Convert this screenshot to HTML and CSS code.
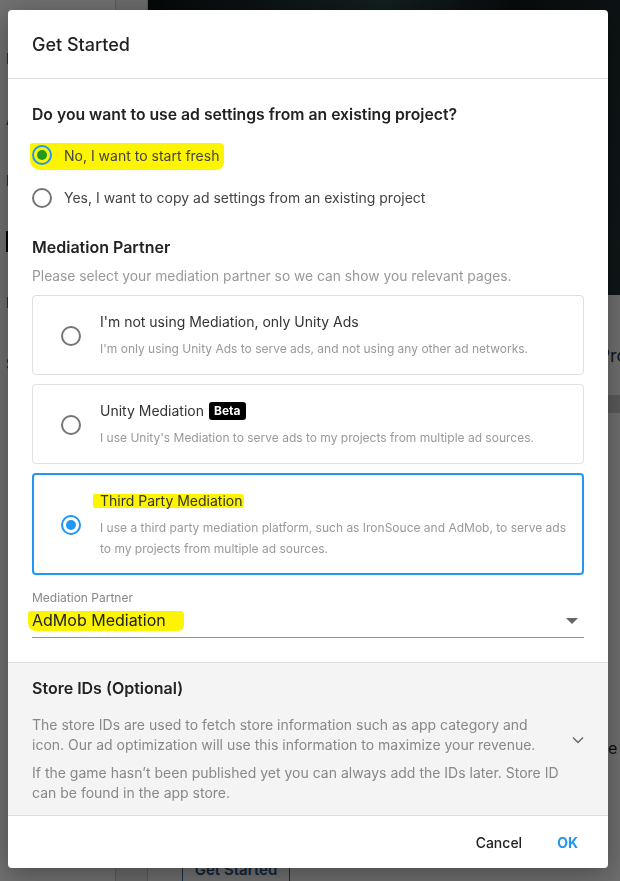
FILE: index.html
```html
<!DOCTYPE html>
<html lang="en">
<head>
  <meta charset="UTF-8">
  <title>Get Started</title>
  <link rel="stylesheet" href="styles.css">
</head>
<body>
  <div class="page">
    <aside class="side">
      <p class="side-item">Monetization</p>
      <p class="side-item">Ad Units</p>
      <p class="side-item">Placements</p>
      <p class="side-item"><span class="side-badge">Beta</span></p>
      <p class="side-item">Reports</p>
      <p class="side-item">Settings</p>
    </aside>
    <div class="rail"></div>
    <main class="main">
      <div class="hero">
        <h2 class="hero-title">Start with Unity Ads and Power<br>Discover revenue</h2>
      </div>
      <div class="tabs"><span>Overview</span><span>Projects</span></div>
      <div class="band"></div>
      <div class="intro">
        <p>Set up your project and choose how you want to serve ads to your players.</p>
      </div>
      <div class="intro intro-low">
        <p>You will need an ad unit before ads can be shown in your game.</p>
      </div>
      <button class="start-btn">Get Started</button>
    </main>
  </div>

  <div class="overlay">
    <div class="modal">
      <header class="modal-head">
        <h1 class="modal-title">Get Started</h1>
      </header>

      <div class="modal-body">
        <h2 class="question">Do you want to use ad settings from an existing project?</h2>
        <div class="choice-list">
          <label class="choice">
            <span class="hl hl-first">
              <span class="radio radio-on radio-marked"></span>
              <span class="choice-text">No, I want to start fresh</span>
            </span>
          </label>
          <label class="choice">
            <span class="radio"></span>
            <span class="choice-text">Yes, I want to copy ad settings from an existing project</span>
          </label>
        </div>

        <h2 class="section-title">Mediation Partner</h2>
        <p class="section-sub">Please select your mediation partner so we can show you relevant pages.</p>

        <div class="cards">
          <div class="card">
            <span class="radio"></span>
            <div class="card-text">
              <div class="card-title">I'm not using Mediation, only Unity Ads</div>
              <div class="card-desc">I'm only using Unity Ads to serve ads, and not using any other ad networks.</div>
            </div>
          </div>
          <div class="card">
            <span class="radio"></span>
            <div class="card-text">
              <div class="card-title">Unity Mediation <span class="badge">Beta</span></div>
              <div class="card-desc">I use Unity's Mediation to serve ads to my projects from multiple ad sources.</div>
            </div>
          </div>
          <div class="card card-on">
            <span class="radio radio-on"></span>
            <div class="card-text">
              <div class="card-title"><span class="hl hl-card">Third Party Mediation</span></div>
              <div class="card-desc">I use a third party mediation platform, such as IronSouce and AdMob, to serve ads to my projects from multiple ad sources.</div>
            </div>
          </div>
        </div>

        <div class="select">
          <div class="select-label">Mediation Partner</div>
          <div class="select-field">
            <span class="hl hl-select">AdMob Mediation</span>
            <span class="select-arrow"></span>
          </div>
        </div>
      </div>

      <section class="store">
        <div class="store-text">
          <h2 class="store-title">Store IDs (Optional)</h2>
          <p>The store IDs are used to fetch store information such as app category and icon. Our ad optimization will use this information to maximize your revenue.</p>
          <p>If the game hasn’t been published yet you can always add the IDs later. Store ID can be found in the app store.</p>
        </div>
        <svg class="chevron" width="12" height="8" viewBox="0 0 12 8">
          <path d="M1 1.5 L6 6.5 L11 1.5" fill="none" stroke="#666" stroke-width="1.4"/>
        </svg>
      </section>

      <footer class="modal-foot">
        <button class="btn">Cancel</button>
        <button class="btn btn-ok">OK</button>
      </footer>
    </div>
  </div>
</body>
</html>
```

FILE: styles.css
```css
body {
  margin: 0;
  font-family: Inter, "Noto Sans", sans-serif;
  background-color: #fff;
  overflow: hidden;
}

/* page behind the dialog */
.page {
  display: flex;
  height: 881px;
  background-color: #fbfbfb;
}

.side {
  flex: none;
  width: 116px;
  padding-top: 50px;
  border-right: 1px solid #ccc;
  background-color: #fff;
  box-sizing: border-box;
}

.side-item {
  margin: 0 0 44px;
  padding-left: 6px;
  font-size: 14px;
  color: #333;
}

.side-badge {
  background-color: #000;
  color: #fff;
  padding: 2px 6px;
  font-weight: bold;
}

.rail {
  flex: none;
  width: 32px;
  border-right: 1px solid #ccc;
  background-color: #f2f2f2;
  box-sizing: border-box;
}

.main {
  flex: 1;
  min-width: 0;
  display: flex;
  flex-direction: column;
  overflow: hidden;
}

.hero {
  height: 295px;
  background: linear-gradient(100deg, #0b1214 0%, #2a4548 45%, #10191b 70%, #243436 100%);
  padding: 108px 0 0 150px;
  box-sizing: border-box;
}

.hero-title {
  margin: 0;
  color: #fff;
  font-size: 22px;
  line-height: 24px;
}

.tabs {
  display: flex;
  gap: 40px;
  padding: 50px 0 0 330px;
  height: 100px;
  box-sizing: border-box;
  font-size: 18px;
  color: #333;
}

.band {
  height: 18px;
  background-color: #ccc;
}

.intro {
  padding: 95px 0 0 300px;
  font-size: 16px;
  line-height: 20px;
  color: #222;
}

.intro p {
  margin: 0;
}

.intro-low {
  padding-top: 130px;
}

.start-btn {
  align-self: flex-start;
  margin: auto 0 0 34px;
  width: 108px;
  height: 24px;
  border: 1px solid #2f6fb0;
  border-bottom: 0;
  background: #fff;
  color: #27558a;
  font-family: inherit;
  font-size: 15px;
  font-weight: 600;
}

.overlay {
  position: fixed;
  inset: 0;
  background-color: rgba(0, 0, 0, 0.56);
}

/* dialog */
.modal {
  position: absolute;
  top: 10px;
  left: 8px;
  width: 600px;
  background-color: #fff;
  border-radius: 4px;
  box-shadow: 0 6px 28px rgba(0, 0, 0, 0.35);
  overflow: hidden;
}

.modal-head {
  height: 68px;
  padding: 0 24px;
  display: flex;
  align-items: center;
  border-bottom: 1px solid #e0e0e0;
}

.modal-title {
  margin: 0;
  font-size: 18px;
  font-weight: 500;
  color: #222;
}

.modal-body {
  padding: 24px 24px 24px;
}

.question {
  margin: 0 0 9px;
  font-size: 15.75px;
  line-height: 24px;
  font-weight: 600;
  color: #222;
}

.choice {
  height: 41px;
  display: flex;
  align-items: center;
  gap: 12px;
}

.choice-text {
  font-size: 14px;
  color: #444;
}

.radio {
  flex: none;
  width: 20px;
  height: 20px;
  border: 2px solid #757575;
  border-radius: 50%;
  box-sizing: border-box;
  display: inline-flex;
  align-items: center;
  justify-content: center;
  background-color: #fff;
}

.radio-on {
  border-color: #2196f3;
}

.radio-on::after {
  content: "";
  width: 10px;
  height: 10px;
  border-radius: 50%;
  background-color: #2196f3;
}

.radio-marked {
  background-color: transparent;
}

.radio-marked::after {
  background-color: #1f9a1f;
}

/* highlighter marks */
.hl {
  background-color: #fcf400;
}

.hl-first {
  display: inline-flex;
  align-items: center;
  gap: 12px;
  margin-left: -2px;
  padding: 2px 5px 5px 2px;
  border-radius: 3px 4px 8px 10px;
}

.hl-card {
  padding: 0 2px 0 7px;
  margin-left: -7px;
  line-height: 14px;
  display: inline-block;
  border-radius: 2px 3px 4px 2px;
}

.hl-select {
  display: inline-block;
  padding: 0 18px 1px 4px;
  margin-left: -4px;
  line-height: 19px;
  border-radius: 3px 4px 6px 8px;
}

.section-title {
  margin: 17px 0 7px;
  font-size: 16px;
  line-height: 24px;
  font-weight: 600;
  color: #222;
}

.section-sub {
  margin: 0 0 9px;
  font-size: 13.8px;
  line-height: 20px;
  color: #999;
}

.cards {
  display: flex;
  flex-direction: column;
  gap: 9px;
}

.card {
  display: flex;
  align-items: center;
  gap: 19px;
  padding: 16px 12px 15px 28px;
  border: 1px solid #e0e0e0;
  border-radius: 4px;
}

.card-on {
  padding: 16px 11px 14px 27px;
  border: 2px solid #2196f3;
}

.card-title {
  height: 20px;
  font-size: 14px;
  line-height: 20px;
  color: #333;
  display: flex;
  align-items: center;
  gap: 5px;
}

.badge {
  background-color: #000;
  color: #fff;
  font-size: 12px;
  line-height: 18px;
  font-weight: 700;
  padding: 0 5px;
  border-radius: 3px;
}

.card-desc {
  margin-top: 6px;
  font-size: 12px;
  line-height: 21px;
  color: #999;
}

.select {
  margin-top: 15px;
}

.select-label {
  font-size: 12px;
  line-height: 16px;
  color: #888;
}

.select-field {
  height: 24px;
  margin-top: 3px;
  display: flex;
  align-items: center;
  justify-content: space-between;
  padding-bottom: 4px;
  border-bottom: 1px solid #949494;
  font-size: 16px;
  line-height: 24px;
  color: #222;
}

.select-arrow {
  width: 0;
  height: 0;
  margin-right: 6px;
  border-left: 6px solid transparent;
  border-right: 6px solid transparent;
  border-top: 6px solid #666;
}

.store {
  display: flex;
  align-items: center;
  gap: 10px;
  padding: 13px 24px 12px;
  background-color: #f4f4f4;
  border-top: 1px solid #e0e0e0;
  border-bottom: 1px solid #ddd;
}

.store-text {
  width: 530px;
}

.store-title {
  margin: 0 0 15px;
  font-size: 16px;
  line-height: 24px;
  font-weight: 600;
  color: #222;
}

.store-text p {
  margin: 0 0 8px;
  font-size: 14px;
  line-height: 20px;
  color: #888;
}

.store-text p:last-child {
  margin-bottom: 0;
}

.chevron {
  flex: none;
}

.modal-foot {
  height: 52px;
  display: flex;
  align-items: center;
  justify-content: flex-end;
  gap: 11px;
  padding: 0 18px;
}

.btn {
  border: 0;
  background: none;
  padding: 8px 12px;
  font-family: inherit;
  font-size: 14px;
  font-weight: 500;
  color: #222;
  cursor: pointer;
}

.btn-ok {
  color: #2196f3;
  font-weight: 700;
}
```
